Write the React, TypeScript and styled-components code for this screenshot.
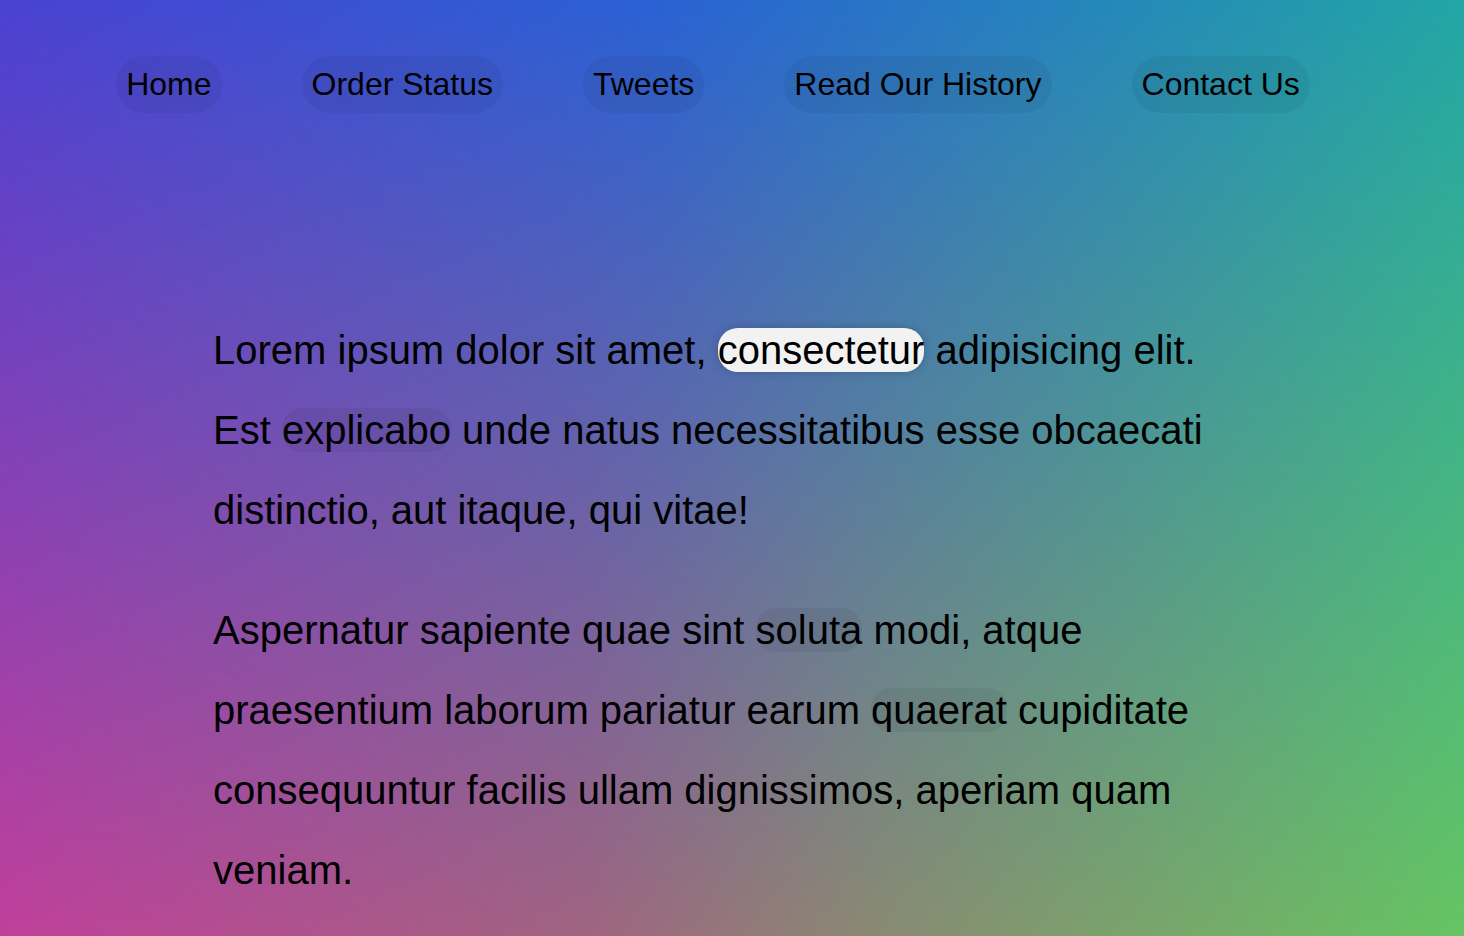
import React from 'react';
import styled, { createGlobalStyle } from 'styled-components';

const GlobalStyle = createGlobalStyle`
  html {
    box-sizing: border-box;
  }
  *, *:before, *:after {
    box-sizing: inherit;
  }
  body {
    margin: 0;
    font-family: "Liberation Sans", Arial, Helvetica, sans-serif;
  }
`;

// top row of the backdrop, the bottom row fades in over it
const Page = styled.div`
  position: relative;
  isolation: isolate;
  min-height: 100vh;
  padding-right: 38px;
  background: linear-gradient(to right, #4a42d2 0%, #2a62d4 45%, #22a6a6 100%);

  &::before {
    content: '';
    position: absolute;
    inset: 0;
    z-index: -1;
    background: linear-gradient(to right, #c0409a 0%, #a06480 40%, #8a8a72 60%, #66c462 100%);
    -webkit-mask-image: linear-gradient(to bottom, transparent, black);
    mask-image: linear-gradient(to bottom, transparent, black);
  }
`;

const Menu = styled.ul`
  display: flex;
  justify-content: center;
  list-style: none;
  padding: 0;
  margin: 0;
  padding-top: 56px;
  font-size: 32px;
`;

const MenuItem = styled.li`
  display: flex;
`;

const MenuLink = styled.a`
  display: block;
  padding: 10px;
  margin: 0 40px;
  color: black;
  text-decoration: none;
  background: rgba(0, 0, 0, 0.05);
  border-radius: 40px;
`;

const Wrapper = styled.div`
  max-width: 1000px;
  margin: 197px auto 0;
  font-size: 40px;
  line-height: 2;
`;

const Paragraph = styled.p`
  margin: 0 0 40px;

  &:last-child {
    margin-bottom: 0;
  }
`;

const TextLink = styled.a<{ $active?: boolean }>`
  color: black;
  text-decoration: none;
  border-radius: 20px;
  background: ${(p) =>
    p.$active
      ? 'linear-gradient(rgba(0, 0, 0, 0.05), rgba(0, 0, 0, 0.05)), white'
      : 'rgba(0, 0, 0, 0.05)'};
  box-shadow: ${(p) => (p.$active ? '0 0 10px rgba(0, 0, 0, 0.2)' : 'none')};
`;

const menuItems = ['Home', 'Order Status', 'Tweets', 'Read Our History', 'Contact Us'];

function App() {
  return (
    <Page>
      <GlobalStyle />
      <nav>
        <Menu>
          {menuItems.map((item) => (
            <MenuItem key={item}>
              <MenuLink href="#">{item}</MenuLink>
            </MenuItem>
          ))}
        </Menu>
      </nav>
      <Wrapper>
        <Paragraph>
          Lorem ipsum dolor sit amet, <TextLink href="#" $active>consectetur</TextLink> adipisicing elit. Est{' '}
          <TextLink href="#">explicabo</TextLink> unde natus necessitatibus esse obcaecati distinctio, aut itaque, qui
          vitae!
        </Paragraph>
        <Paragraph>
          Aspernatur sapiente quae sint <TextLink href="#">soluta</TextLink> modi, atque praesentium laborum pariatur
          earum <TextLink href="#">quaerat</TextLink> cupiditate consequuntur facilis ullam dignissimos, aperiam quam
          veniam.
        </Paragraph>
      </Wrapper>
    </Page>
  );
}

export default App;
